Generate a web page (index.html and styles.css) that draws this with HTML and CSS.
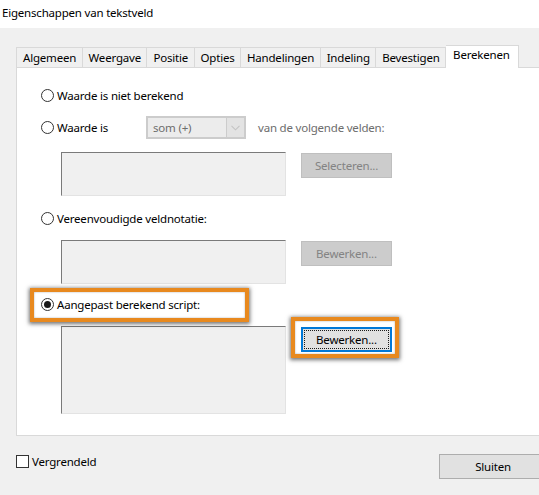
FILE: index.html
```html
<!DOCTYPE html>
<html>
<head>
<meta charset="utf-8">
<link rel="stylesheet" href="styles.css">
</head>
<body>
<div class="titlebar">Eigenschappen van tekstveld</div>
<div class="dialog">
  <div class="tabs">
    <div class="tab">Algemeen</div>
    <div class="tab">Weergave</div>
    <div class="tab">Positie</div>
    <div class="tab">Opties</div>
    <div class="tab">Handelingen</div>
    <div class="tab">Indeling</div>
    <div class="tab">Bevestigen</div>
    <div class="tab active">Berekenen</div>
  </div>
  <div class="panel">
    <div class="row r1">
      <span class="radio"></span><span class="label">Waarde is niet berekend</span>
    </div>
    <div class="row r2">
      <div class="lead"><span class="radio"></span><span class="label">Waarde is</span></div>
      <div class="combo"><span class="combo-text">som (+)</span><span class="combo-arrow"><svg width="9" height="6" viewBox="0 0 9 6"><path d="M0.5 0.8 L4.5 4.8 L8.5 0.8" fill="none" stroke="#c4c4c4" stroke-width="1.1"/></svg></span></div>
      <span class="muted">van de volgende velden:</span>
    </div>
    <div class="field f1">
      <div class="box short"></div>
      <div class="btn disabled">Selecteren...</div>
    </div>
    <div class="row r3">
      <span class="radio"></span><span class="label">Vereenvoudigde veldnotatie:</span>
    </div>
    <div class="field f2">
      <div class="box short"></div>
      <div class="btn disabled">Bewerken...</div>
    </div>
    <div class="row r4">
      <span class="hl hl-radio"></span>
      <span class="radio checked"></span><span class="label">Aangepast berekend script:</span>
    </div>
    <div class="field f3">
      <div class="box tall"></div>
      <div class="btn-wrap">
        <span class="hl hl-btn"></span>
        <div class="btn focused"><span class="focus">Bewerken...</span></div>
      </div>
    </div>
  </div>
  <div class="footer">
    <div class="check"><span class="checkbox"></span><span class="label">Vergrendeld</span></div>
    <div class="btn close">Sluiten</div>
  </div>
</div>
</body>
</html>
```
FILE: styles.css
```css
html, body {
  margin: 0;
  padding: 0;
  overflow: hidden;
}
body {
  background: #f0f0f0;
  font-family: "Noto Sans", "Open Sans", sans-serif;
  font-size: 11.5px;
  letter-spacing: -0.2px;
  color: #000;
  width: 539px;
  height: 495px;
}
.titlebar {
  background: #fff;
  height: 28px;
  padding-left: 2px;
  box-sizing: border-box;
  padding-bottom: 2px;
  line-height: 26px;
  color: #000;
}
.dialog {
  width: 560px;
}
.tabs {
  display: flex;
  align-items: flex-end;
  margin-left: 16px;
  margin-top: 17px;
  height: 22px;
  position: relative;
  z-index: 1;
}
.tab {
  height: 20px;
  box-sizing: border-box;
  border: 1px solid #d9d9d9;
  border-bottom: none;
  border-right: none;
  background: #f0f0f0;
  padding: 0 5.5px 0 6px;
  line-height: 19px;
  white-space: nowrap;
}
.tab:nth-child(7) {
  border-right: 1px solid #d9d9d9;
}
.tab.active {
  height: 23px;
  background: #fff;
  border: 1px solid #d9d9d9;
  border-bottom: none;
  margin-bottom: -1px;
  padding: 0 8px 0 7px;
  line-height: 18px;
  border-left: none;
}
.panel {
  margin-left: 16px;
  background: #fff;
  border: 1px solid #d9d9d9;
  border-right: none;
  height: 367px;
  padding-left: 24px;
  box-sizing: content-box;
}
.row {
  display: flex;
  align-items: center;
  height: 20px;
}
.r1 { margin-top: 17px; }
.r2 { margin-top: 11px; height: 23px; }
.r3 { margin-top: 12px; }
.r4 { margin-top: 10px; position: relative; }
.lead {
  display: flex;
  align-items: center;
  width: 105px;
}
.radio {
  width: 13px;
  height: 13px;
  box-sizing: border-box;
  border: 1px solid #333;
  border-radius: 50%;
  background: #fff;
  margin-right: 3px;
  flex: none;
  position: relative;
}
.radio.checked::after {
  content: "";
  position: absolute;
  left: 2px;
  top: 2px;
  width: 7px;
  height: 7px;
  border-radius: 50%;
  background: #1a1a1a;
}
.label {
  white-space: nowrap;
  position: relative;
}
.combo {
  display: flex;
  width: 100px;
  height: 23px;
  box-sizing: border-box;
  border: 1px solid #cccccc;
  background: #cccccc;
  padding: 1px;
}
.combo-text {
  flex: 1;
  background: #ececec;
  color: #6d6d6d;
  padding-left: 5px;
  line-height: 19px;
}
.combo-arrow {
  width: 17px;
  background: #e3e3e3;
  display: flex;
  align-items: center;
  justify-content: center;
  margin-left: 1px;
}
.muted {
  color: #6d6d6d;
  margin-left: 12px;
  white-space: nowrap;
}
.field {
  display: flex;
  align-items: flex-start;
  margin-left: 20px;
}
.f1 { margin-top: 13px; }
.f2 { margin-top: 12px; }
.f3 { margin-top: 12px; }
.box {
  width: 225px;
  box-sizing: border-box;
  background: #f0f0f0;
  border-top: 1px solid #7a7a7a;
  border-left: 1px solid #7a7a7a;
  border-right: 1px solid #e3e3e3;
  border-bottom: 1px solid #e3e3e3;
}
.box.short { height: 44px; }
.box.tall { height: 88px; }
.btn {
  width: 91px;
  height: 25px;
  box-sizing: border-box;
  margin-left: 15px;
  text-align: center;
  line-height: 23px;
  white-space: nowrap;
}
.field .btn.disabled {
  margin-top: 1px;
}
.btn.disabled {
  background: #cccccc;
  border: 1px solid #bfbfbf;
  color: #838383;
}
.btn-wrap {
  position: relative;
  margin-left: 15px;
  margin-top: 1px;
}
.btn-wrap .btn {
  margin-left: 0;
}
.btn.focused {
  position: relative;
  background: #e1e1e1;
  border: 2px solid #0078d7;
  padding: 1px;
  line-height: 17px;
}
.focus {
  display: block;
  height: 19px;
  box-sizing: border-box;
  border: 1px dotted #1a1a1a;
  line-height: 17px;
}
.hl {
  position: absolute;
  border: 4px solid #e8891e;
  box-shadow: 0 1px 4px 1px rgba(0, 0, 0, 0.55), inset 0 0 2px rgba(0,0,0,0.35);
  box-sizing: border-box;
}
.hl-radio {
  left: -11px;
  top: -6px;
  width: 219px;
  height: 34px;
  background: #fff;
}
.hl-btn {
  left: -10px;
  top: -10px;
  width: 108px;
  height: 41px;
  background: #fff;
}
.footer {
  display: flex;
  align-items: flex-start;
  margin-top: 18px;
  padding-left: 16px;
}
.check {
  display: flex;
  align-items: center;
  margin-top: 0;
}
.checkbox {
  width: 13px;
  height: 13px;
  box-sizing: border-box;
  border: 1px solid #333;
  background: #fff;
  margin-right: 3px;
}
.btn.close {
  margin-left: auto;
  margin-right: 13px;
  width: 108px;
  background: #e1e1e1;
  border: 1px solid #adadad;
  color: #000;
}
```
